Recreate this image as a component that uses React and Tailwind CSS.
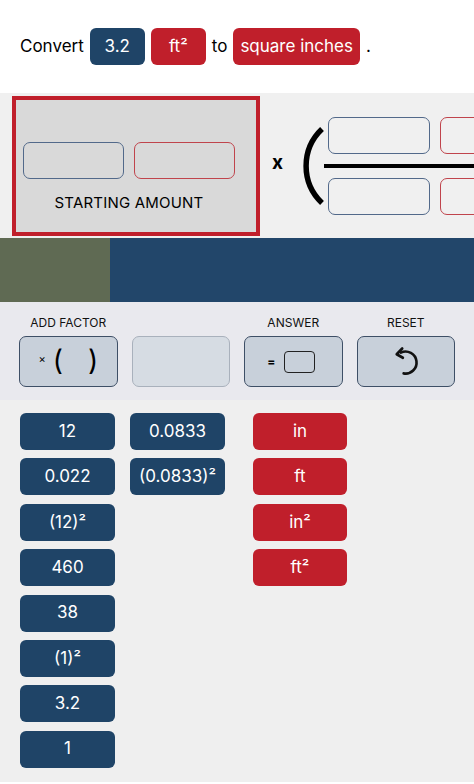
const NAVY = 'bg-[#1f4467]';
const RED = 'bg-[#c01f2b]';

function Chip({ children, color, className = '' }) {
    return (
        <div className={`${color} ${className} flex items-center justify-center rounded-[6px] text-white text-[17px]`}>
            {children}
        </div>
    );
}

function Slot({ red, className = '' }) {
    return (
        <div
            className={`${className} h-[37px] rounded-[7px] border ${red ? 'border-[#c0444c]' : 'border-[#52698a]'}`}
        />
    );
}

function Paren() {
    // arc-shaped opening bracket in front of the fraction
    return (
        <svg width="20" height="80" viewBox="0 0 20 80" className="shrink-0 overflow-visible">
            <path d="M18 3 A51 51 0 0 0 18 77" fill="none" stroke="#000" strokeWidth="5.5" />
        </svg>
    );
}

function UndoIcon() {
    return (
        <svg width="33" height="33" viewBox="0 0 30 30" fill="none" stroke="#111" strokeWidth="2.4" strokeLinecap="round" strokeLinejoin="round">
            <path d="M10.8 6.9 A10 10 0 1 1 13.3 25.8" />
            <path d="M12 3.2 L7 8.4 L12.6 11.6" />
        </svg>
    );
}

export default function App() {
    const leftCol = ['12', '0.022', '(12)²', '460', '38', '(1)²', '3.2', '1'];
    const midCol = ['0.0833', '(0.0833)²'];
    const units = ['in', 'ft', 'in²', 'ft²'];

    return (
        <div className="w-[474px] h-[784px] overflow-hidden bg-white font-['Inter',sans-serif] text-black">
            {/* question */}
            <div className="h-[93px] flex items-center pl-[20px] gap-[6px] text-[17px]">
                <span>Convert</span>
                <Chip color={NAVY} className="w-[55px] h-[37px]">3.2</Chip>
                <Chip color={RED} className="w-[55px] h-[37px]">ft²</Chip>
                <span>to</span>
                <Chip color={RED} className="h-[37px] px-[7px]">square inches</Chip>
                <span>.</span>
            </div>

            {/* workspace */}
            <div className="h-[145px] bg-[#f0f0f0] flex items-center overflow-hidden">
                <div className="ml-[12px] w-[248px] h-[140px] shrink-0 border-4 border-[#c01f2b] bg-[#d9d9d9] pl-[7px] pt-[42px]">
                    <div className="w-[212px] flex gap-[10px]">
                        <Slot className="w-[101px]" />
                        <Slot red className="w-[101px]" />
                    </div>
                    <div className="w-[212px] text-center text-[15px] mt-[13px] tracking-[0.2px]">STARTING AMOUNT</div>
                </div>
                <div className="ml-[12px] text-[19px] font-bold leading-none pb-[7px]">x</div>
                <div className="ml-[21px] flex items-center">
                    <Paren />
                    <div className="flex flex-col w-[160px] shrink-0">
                        <div className="flex gap-[10px] pl-[4px]">
                            <Slot className="w-[102px] shrink-0" />
                            <Slot red className="w-[102px] shrink-0" />
                        </div>
                        <div className="h-[4px] bg-black my-[10px]" />
                        <div className="flex gap-[10px] pl-[4px]">
                            <Slot className="w-[102px] shrink-0" />
                            <Slot red className="w-[102px] shrink-0" />
                        </div>
                    </div>
                </div>
            </div>

            {/* progress bar */}
            <div className="h-[64px] flex">
                <div className="w-[110px] bg-[#5f6a53]" />
                <div className="flex-1 bg-[#22466a]" />
            </div>

            {/* controls */}
            <div className="h-[98px] bg-[#e9e9ee] px-[19px] pt-[14px] grid grid-cols-4 gap-x-[14px] content-start">
                {['ADD FACTOR', '', 'ANSWER', 'RESET'].map((l, i) => (
                    <div key={i} className="text-center text-[12px] h-[20px] leading-[14px] text-[#111]">{l}</div>
                ))}
                <div className="h-[51px] rounded-[7px] border-[1.5px] border-[#3e4f66] bg-[#c8d0da] flex items-center justify-center">
                    <span className="text-[11px] mt-[-4px]">×</span>
                    <span className="text-[28px] leading-none mb-[3px] ml-[7px]">(</span>
                    <span className="text-[28px] leading-none mb-[3px] ml-[25px]">)</span>
                </div>
                <div className="h-[51px] rounded-[7px] border-[1.5px] border-[#a9b1bc] bg-[#d6dce3]" />
                <div className="h-[51px] rounded-[7px] border-[1.5px] border-[#3e4f66] bg-[#c8d0da] flex items-center justify-center gap-[9px] pr-[4px]">
                    <span className="text-[12px] font-bold">=</span>
                    <div className="w-[31px] h-[22px] rounded-[4px] border-[1.5px] border-[#222]" />
                </div>
                <div className="h-[51px] rounded-[7px] border-[1.5px] border-[#3e4f66] bg-[#c8d0da] flex items-center justify-center">
                    <UndoIcon />
                </div>
            </div>

            {/* tiles */}
            <div className="h-[382px] bg-[#efefef] pl-[20px] pt-[13px] flex">
                <div className="flex flex-col gap-[8.4px] w-[95px]">
                    {leftCol.map((t) => (
                        <Chip key={t} color={NAVY} className="h-[37px]">{t}</Chip>
                    ))}
                </div>
                <div className="flex flex-col gap-[8.4px] w-[95px] ml-[15px]">
                    {midCol.map((t) => (
                        <Chip key={t} color={NAVY} className="h-[37px]">{t}</Chip>
                    ))}
                </div>
                <div className="flex flex-col gap-[8.4px] w-[94px] ml-[28px]">
                    {units.map((t) => (
                        <Chip key={t} color={RED} className="h-[37px]">{t}</Chip>
                    ))}
                </div>
            </div>
        </div>
    );
}
